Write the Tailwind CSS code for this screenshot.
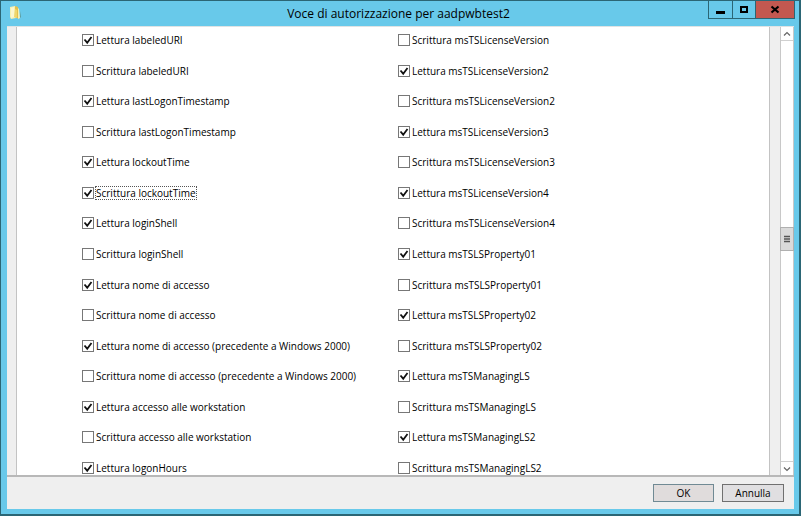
<!DOCTYPE html>
<html lang="it">
<head>
<meta charset="utf-8">
<meta name="viewport" content="width=device-width, initial-scale=1">
<title>Voce di autorizzazione per aadpwbtest2</title>
<script src="https://cdn.jsdelivr.net/npm/@tailwindcss/browser@4"></script>
</head>
<body class="flex h-screen flex-col overflow-hidden border border-r-2 border-b-2 border-[#2b6675] bg-[#68c9ea] font-['Open_Sans','Noto_Sans',sans-serif] text-black">
<header class="flex h-[25px] shrink-0 items-start pr-1 pl-2">
  <svg class="mt-1 size-4 shrink-0" viewBox="0 0 16 16" aria-hidden="true">
    <path d="M1 2l5-1 1 2v10l-5 1-1-2z" fill="#f6f0b0"/>
    <path d="M2 3l3-1v10l-3 1z" fill="#fbf7cf"/>
    <path d="M6 1l3 1 1 12-4-2z" fill="#e2c04c"/>
    <path d="M6 4l2 1v8l-3-1z" fill="#efd66c"/>
    <path d="M9 3l1 1 1 9-2 1z" fill="#f3efb6"/>
    <path d="M11 6l1 6-1 1z" fill="#5f9a9a"/>
  </svg>
  <h1 class="flex-1 pl-16 text-center text-[12px] leading-[25px]">Voce di autorizzazione per aadpwbtest2</h1>
  <div class="flex h-[18px] shrink-0 border border-t-0 border-[#2b6675]">
    <button type="button" aria-label="Riduci a icona" class="grid w-6 place-items-center border-r border-[#2b6675]">
      <svg class="size-3" viewBox="0 0 12 12"><path d="M1 7h9v3H1z"/></svg>
    </button>
    <button type="button" aria-label="Ingrandisci" class="grid w-[23px] place-items-center border-r border-[#2b6675]">
      <svg class="size-3" viewBox="0 0 12 12"><path d="M3 3h6v5h-6z" fill="none" stroke="#000" stroke-width="2"/></svg>
    </button>
    <button type="button" aria-label="Chiudi" class="grid w-[38px] place-items-center bg-[#c35850]">
      <svg class="size-3" viewBox="0 0 12 12"><path d="M2.500 2.500l7 6M9.500 2.500l-7 6" stroke="#000" stroke-width="2.200"/></svg>
    </button>
  </div>
</header>
<main class="mr-[5px] mb-[5px] ml-1.5 flex min-h-0 flex-1 flex-col bg-[#efefef] text-[10px] leading-[14px]">
  <div class="flex min-h-0 flex-1 border-t border-b-2 border-t-[#dfe3e4] border-b-[#b8b8b8]">
    <form id="permissions" class="ml-[9px] grid min-w-0 flex-1 grid-cols-[316px_1fr] border-x border-[#c3c3c3] bg-white pt-1.5 pl-[65px]"></form>
    <div class="ml-2.5 flex w-[14px] shrink-0 flex-col border-x border-[#c8c8c8] bg-white">
      <button type="button" aria-label="Scorri su" class="grid h-[14px] place-items-center border-b border-[#d0d0d0]">
        <svg class="size-2" viewBox="0 0 8 8"><path d="M1 5.500l3-3 3 3" fill="none" stroke="#666" stroke-width="1.200"/></svg>
      </button>
      <div class="flex flex-1 flex-col">
        <div class="grow-[187]"></div>
        <div class="-mx-px grid h-6 place-items-center border border-[#b0b0b0] bg-[#dadada]">
          <svg class="h-2 w-1.5" viewBox="0 0 6 8"><path d="M0 1.500h6M0 4h6M0 6.500h6" stroke="#555" stroke-width="1.300"/></svg>
        </div>
        <div class="grow-[211]"></div>
      </div>
      <button type="button" aria-label="Scorri giù" class="grid h-[14px] place-items-center border-t border-[#d0d0d0]">
        <svg class="size-2" viewBox="0 0 8 8"><path d="M1 2.500l3 3 3-3" fill="none" stroke="#666" stroke-width="1.200"/></svg>
      </button>
    </div>
  </div>
  <footer class="flex h-8 shrink-0 items-center justify-end gap-2 pr-[10px]">
    <button type="submit" form="permissions" class="h-[18px] w-[61px] border border-[#708a94] bg-[#e0dcdc] leading-none">OK</button>
    <button type="button" class="h-[18px] w-[62px] border border-[#707070] bg-[#e0dfe1] leading-none">Annulla</button>
  </footer>
</main>
<script>
const left = [
  ["Lettura labeledURI", 1], ["Scrittura labeledURI", 0],
  ["Lettura lastLogonTimestamp", 1], ["Scrittura lastLogonTimestamp", 0],
  ["Lettura lockoutTime", 1], ["Scrittura lockoutTime", 1],
  ["Lettura loginShell", 1], ["Scrittura loginShell", 0],
  ["Lettura nome di accesso", 1], ["Scrittura nome di accesso", 0],
  ["Lettura nome di accesso (precedente a Windows 2000)", 1],
  ["Scrittura nome di accesso (precedente a Windows 2000)", 0],
  ["Lettura accesso alle workstation", 1], ["Scrittura accesso alle workstation", 0],
  ["Lettura logonHours", 1]
];
const right = [
  ["Scrittura msTSLicenseVersion", 0],
  ["Lettura msTSLicenseVersion2", 1], ["Scrittura msTSLicenseVersion2", 0],
  ["Lettura msTSLicenseVersion3", 1], ["Scrittura msTSLicenseVersion3", 0],
  ["Lettura msTSLicenseVersion4", 1], ["Scrittura msTSLicenseVersion4", 0],
  ["Lettura msTSLSProperty01", 1], ["Scrittura msTSLSProperty01", 0],
  ["Lettura msTSLSProperty02", 1], ["Scrittura msTSLSProperty02", 0],
  ["Lettura msTSManagingLS", 1], ["Scrittura msTSManagingLS", 0],
  ["Lettura msTSManagingLS2", 1], ["Scrittura msTSManagingLS2", 0]
];
const current = "Scrittura lockoutTime";
const item = ([name, on]) => `
  <label class="flex h-[14px] items-center">
    <span class="grid size-3 shrink-0">
      <input type="checkbox" ${on ? "checked" : ""} class="peer col-start-1 row-start-1 size-3 appearance-none border border-[#777] bg-white">
      <svg class="pointer-events-none col-start-1 row-start-1 hidden size-3 peer-checked:block" viewBox="0 0 12 12"><path d="M2.500 5.500l2.700 3.200L9.500 3" fill="none" stroke="#111" stroke-width="1.800"/></svg>
    </span>
    <span class="${name === current ? "ml-px border border-dotted border-[#555]" : "ml-px border border-transparent"} whitespace-nowrap leading-3">${name}</span>
  </label>`;
document.getElementById("permissions").innerHTML = [left, right]
  .map(list => `<div class="flex flex-col justify-between">${list.map(item).join("")}</div>`).join("");
</script>
</body>
</html>
